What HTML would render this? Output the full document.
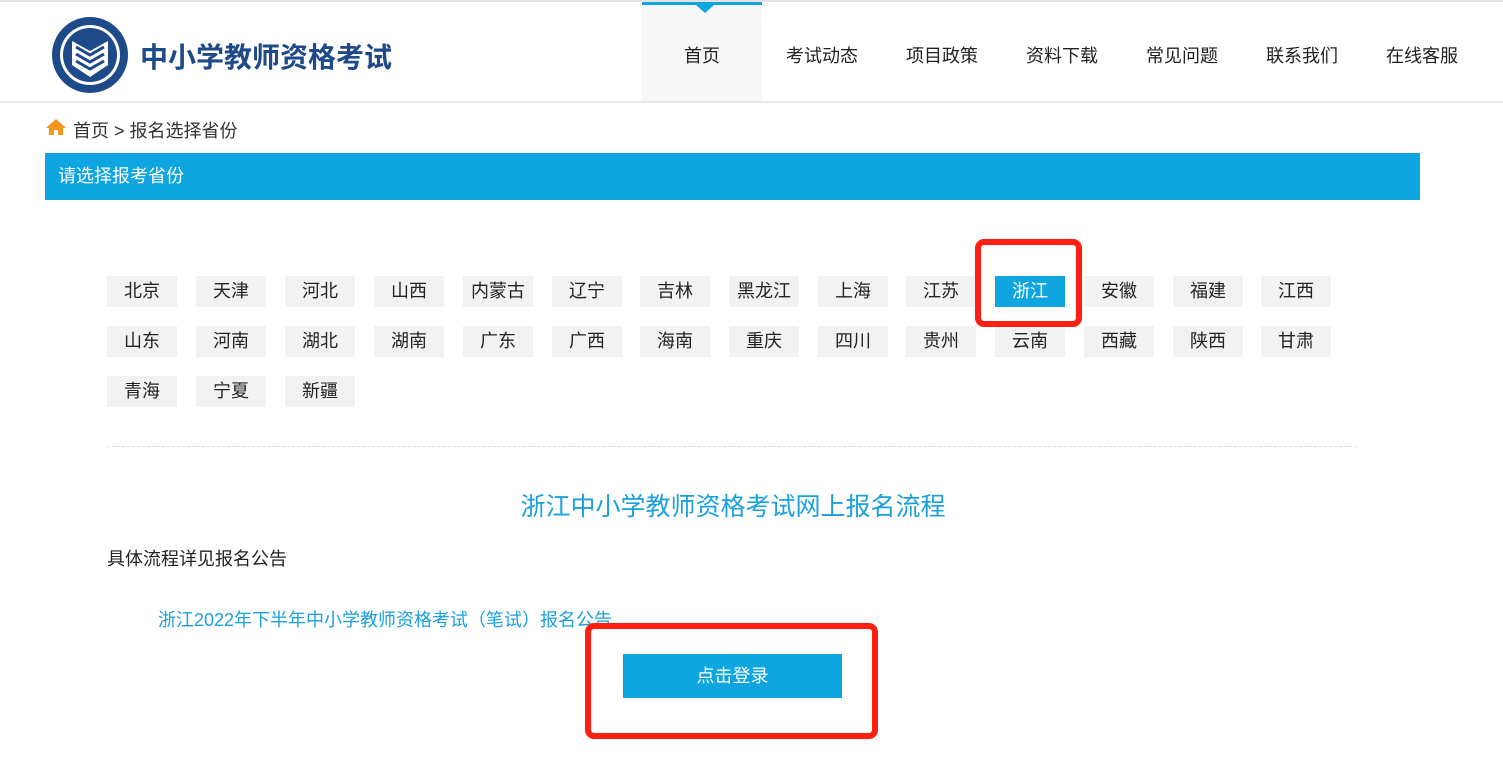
<!DOCTYPE html>
<html><head><meta charset="utf-8"><style>
*{margin:0;padding:0;box-sizing:border-box}
body{width:1503px;height:764px;background:#fff;font-family:"Liberation Sans","Noto Sans CJK SC",sans-serif;position:relative;overflow:hidden;color:#222}
.a{position:absolute}
.nav{top:0;font-size:18px;color:#222;width:120px;height:100px;line-height:112px;text-align:center}
.p{position:absolute;width:70px;height:31px;background:#f2f2f2;font-size:18px;line-height:31px;text-align:center;color:#222}
.red{position:absolute;border:6px solid #ff1e12;border-radius:9px}
</style></head><body>
<div class="a" style="left:0;top:0;width:1503px;height:2px;background:#e2e2e2"></div>
<div class="a" style="left:0;top:101px;width:1503px;height:2px;background:#e8e8e8"></div>
<svg class="a" style="left:50px;top:15px" width="82" height="80" viewBox="0 0 82 80">
<circle cx="40" cy="40" r="38" fill="#1f4a8a"/><circle cx="40" cy="40" r="30" fill="#fff"/><circle cx="40" cy="40" r="27" fill="#1f4a8a"/>
<path d="M22 26 L40 36 L58 26 L58 50 L40 62 L22 50Z" fill="#fff"/>
<path d="M26 32 L40 40 L54 32 M26 39 L40 47 L54 39 M26 46 L40 54 L54 46" stroke="#1f4a8a" stroke-width="3" fill="none"/>
</svg>
<div class="a" style="left:140px;top:36px;font-size:28px;font-weight:bold;color:#1f4a8a">中小学教师资格考试</div>
<div class="a" style="left:642px;top:2px;width:120px;height:99px;background:#f7f7f7"></div>
<div class="a" style="left:642px;top:2px;width:120px;height:3px;background:#0ea5e0"></div>
<div class="a" style="left:696px;top:5px;width:0;height:0;border-left:9px solid transparent;border-right:9px solid transparent;border-top:8px solid #0ea5e0"></div>
<div class="a nav" style="left:642px">首页</div>
<div class="a nav" style="left:762px">考试动态</div>
<div class="a nav" style="left:882px">项目政策</div>
<div class="a nav" style="left:1002px">资料下载</div>
<div class="a nav" style="left:1122px">常见问题</div>
<div class="a nav" style="left:1242px">联系我们</div>
<div class="a nav" style="left:1362px">在线客服</div>
<svg class="a" style="left:45px;top:118px" width="22" height="18" viewBox="0 0 22 18"><path d="M11 1 L1 10 L4 10 L4 17 L9 17 L9 12 L13 12 L13 17 L18 17 L18 10 L21 10Z" fill="#f7941d"/></svg>
<div class="a" style="left:73px;top:117px;font-size:18px;color:#333">首页 &gt; 报名选择省份</div>
<div class="a" style="left:45px;top:153px;width:1375px;height:47px;background:#0ea5e0;color:#fff;font-size:18px;line-height:47px;padding-left:13px">请选择报考省份</div>
<div class="p" style="left:107px;top:276px">北京</div><div class="p" style="left:196px;top:276px">天津</div><div class="p" style="left:285px;top:276px">河北</div><div class="p" style="left:374px;top:276px">山西</div><div class="p" style="left:463px;top:276px">内蒙古</div><div class="p" style="left:552px;top:276px">辽宁</div><div class="p" style="left:640px;top:276px">吉林</div><div class="p" style="left:729px;top:276px">黑龙江</div><div class="p" style="left:818px;top:276px">上海</div><div class="p" style="left:906px;top:276px">江苏</div><div class="p" style="left:995px;top:276px;background:#0ea5e0;color:#fff">浙江</div><div class="p" style="left:1084px;top:276px">安徽</div><div class="p" style="left:1173px;top:276px">福建</div><div class="p" style="left:1261px;top:276px">江西</div>
<div class="p" style="left:107px;top:326px">山东</div><div class="p" style="left:196px;top:326px">河南</div><div class="p" style="left:285px;top:326px">湖北</div><div class="p" style="left:374px;top:326px">湖南</div><div class="p" style="left:463px;top:326px">广东</div><div class="p" style="left:552px;top:326px">广西</div><div class="p" style="left:640px;top:326px">海南</div><div class="p" style="left:729px;top:326px">重庆</div><div class="p" style="left:818px;top:326px">四川</div><div class="p" style="left:906px;top:326px">贵州</div><div class="p" style="left:995px;top:326px">云南</div><div class="p" style="left:1084px;top:326px">西藏</div><div class="p" style="left:1173px;top:326px">陕西</div><div class="p" style="left:1261px;top:326px">甘肃</div>
<div class="p" style="left:107px;top:376px">青海</div><div class="p" style="left:196px;top:376px">宁夏</div><div class="p" style="left:285px;top:376px">新疆</div>
<div class="red" style="left:975px;top:239px;width:107px;height:88px"></div>
<div class="a" style="left:107px;top:446px;width:1250px;border-top:1px dashed #ddd"></div>
<div class="a" style="left:0;top:487px;width:1466px;text-align:center;font-size:25px;color:#1aa0dc">浙江中小学教师资格考试网上报名流程</div>
<div class="a" style="left:107px;top:545px;font-size:18px;color:#222">具体流程详见报名公告</div>
<div class="a" style="left:158px;top:606px;font-size:18px;color:#1aa0dc">浙江2022年下半年中小学教师资格考试（笔试）报名公告</div>
<div class="a" style="left:623px;top:654px;width:219px;height:44px;background:#0ea5e0;color:#fff;font-size:18px;line-height:44px;text-align:center">点击登录</div>
<div class="red" style="left:585px;top:623px;width:293px;height:116px"></div>
</body></html>
